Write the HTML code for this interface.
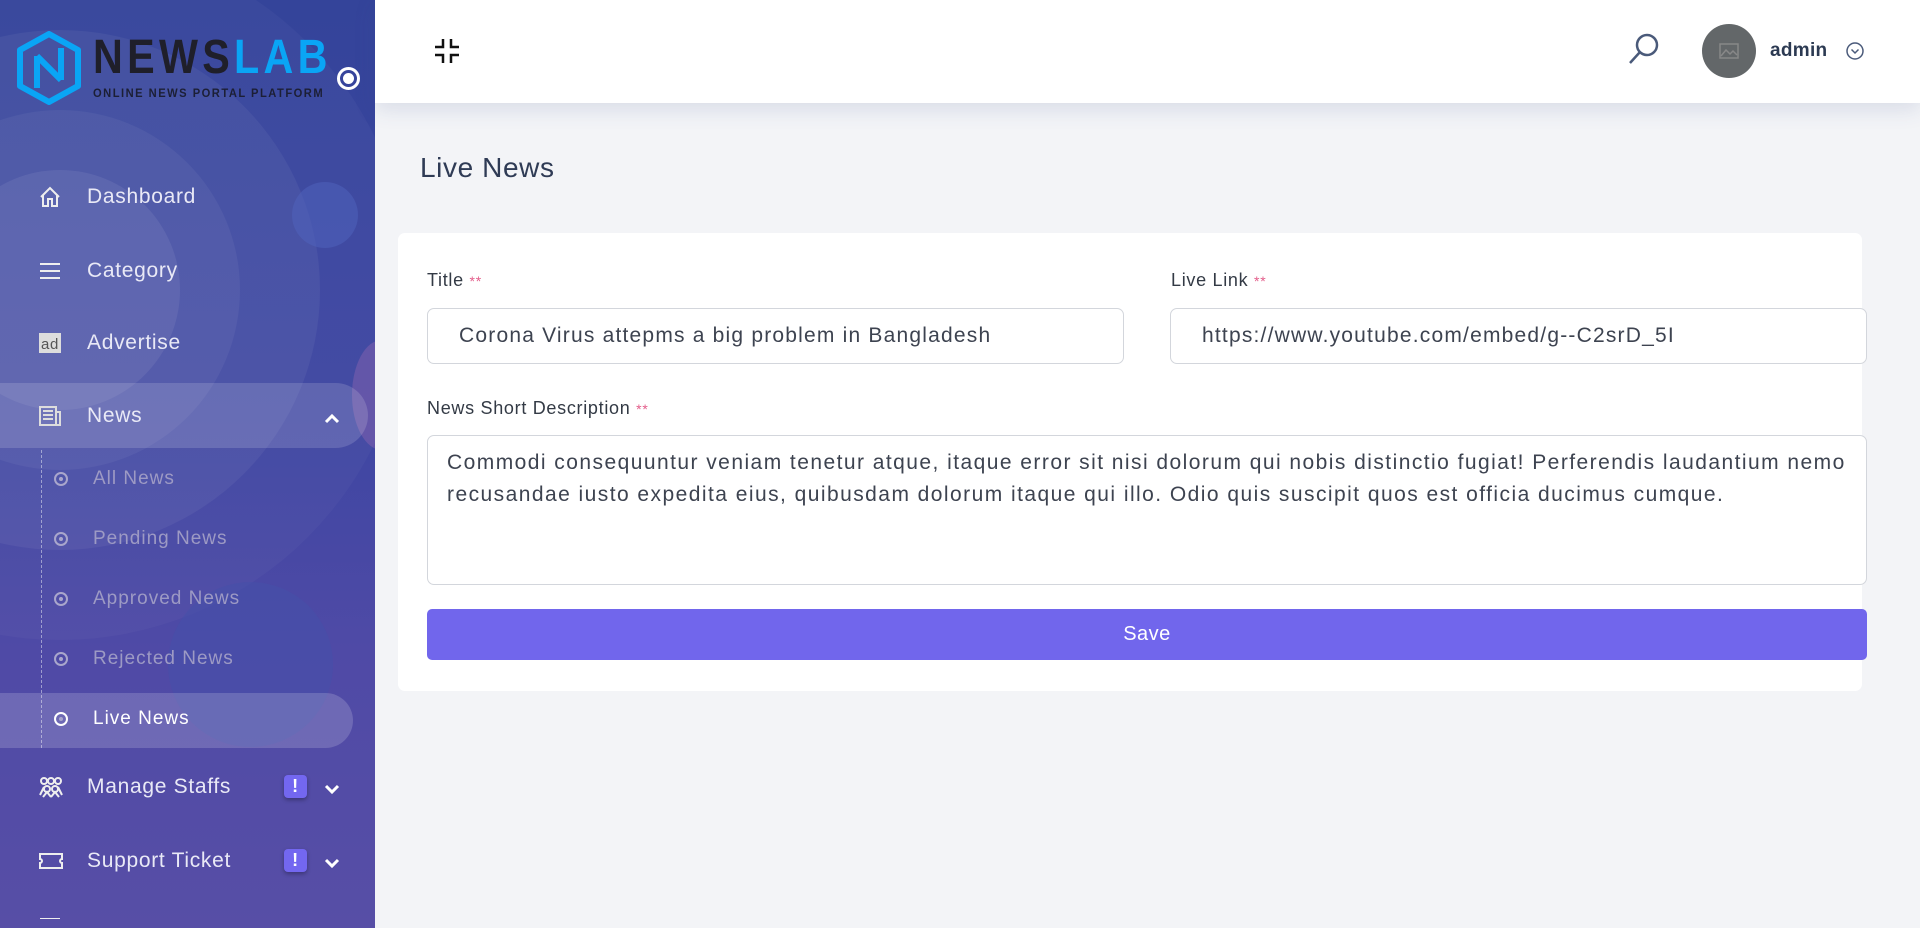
<!DOCTYPE html>
<html><head><meta charset="utf-8"><style>
*{box-sizing:border-box;margin:0;padding:0}
body{width:1920px;height:928px;overflow:hidden;font-family:"Liberation Sans",sans-serif;background:#f3f4f7;position:relative}
.sb{position:absolute;left:0;top:0;width:375px;height:928px;overflow:hidden;background:linear-gradient(180deg,#34449a 0%,#3e46a2 45%,#4f4aa6 70%,#574ea6 100%)}
.circ{position:absolute;border-radius:50%;background:rgba(255,255,255,0.05)}
.it{position:absolute;left:0;width:375px;color:#e9e9f6;font-size:21px;letter-spacing:.7px}
.it .t{position:absolute;left:87px;top:-13px;line-height:26px;white-space:nowrap}
.it svg{position:absolute;left:38px;top:-12px}
.sub{position:absolute;color:#9d9ac4;font-size:19px;letter-spacing:1px}
.sub .t{position:absolute;left:93px;top:-12px;white-space:nowrap;line-height:24px}
.sub .d{position:absolute;left:54px;top:-7px;width:14px;height:14px;border:2px solid #a9a6cc;border-radius:50%}
.sub .d:after{content:"";position:absolute;left:3px;top:3px;width:4px;height:4px;border-radius:50%;background:#a9a6cc}
.badge{position:absolute;left:284px;top:-12px;width:23px;height:23px;background:#7367f0;border-radius:4px;color:#fff;font-weight:bold;font-size:18px;text-align:center;line-height:23px;box-shadow:0 2px 4px rgba(0,0,0,.3)}
.it .chev{position:absolute;left:324px;top:-4px}
.hdr{position:absolute;left:375px;top:0;width:1545px;height:103px;background:#fff;box-shadow:0 6px 20px rgba(60,80,140,.15)}
.card{position:absolute;left:398px;top:233px;width:1464px;height:458px;background:#fff;border-radius:7px}
.lbl{position:absolute;font-size:18px;color:#333a45;letter-spacing:.7px}
.lbl b{color:#e35d8a;font-weight:normal;font-size:14px}
.inp{position:absolute;border:1px solid #d3d6dc;border-radius:7px;background:#fff;color:#3d4350;font-size:21px;letter-spacing:1.2px}
</style></head><body>
<div class="sb">
 <div class="circ" style="left:-290px;top:-60px;width:700px;height:700px;background:rgba(255,255,255,0.03)"></div>
 <div class="circ" style="left:-200px;top:30px;width:520px;height:520px"></div>
 <div class="circ" style="left:-120px;top:110px;width:360px;height:360px"></div>
 <div class="circ" style="left:-60px;top:170px;width:240px;height:240px;background:rgba(255,255,255,0.07)"></div>
 <div class="circ" style="left:292px;top:182px;width:66px;height:66px;background:rgba(80,100,190,.5)"></div>
 <div class="circ" style="left:352px;top:340px;width:60px;height:110px;background:rgba(160,110,180,.35)"></div>
 <div class="circ" style="left:168px;top:582px;width:165px;height:165px;background:rgba(70,80,170,.55)"></div>
 <svg style="position:absolute;left:16px;top:31px" width="66" height="74" viewBox="0 0 66 74"><path d="M33 3 L62 19 L62 55 L33 71 L4 55 L4 19 Z" fill="none" stroke="#0aa5f5" stroke-width="6" stroke-linejoin="round"/><path d="M21 25 V57 M21 25 L45 49 M45 17 V49" fill="none" stroke="#0aa5f5" stroke-width="6"/></svg>
 <div style="position:absolute;left:93px;top:33px;font-size:48px;font-weight:bold;letter-spacing:5px;color:#1f1f2a;line-height:50px;transform:scaleX(.86);transform-origin:left;white-space:nowrap">NEWS<span style="color:#0aa5f5">LAB</span></div>
 <div style="position:absolute;left:93px;top:86px;font-size:12px;font-weight:bold;letter-spacing:1.6px;color:#1c1f35;white-space:nowrap;transform:scaleX(.93);transform-origin:left">ONLINE NEWS PORTAL PLATFORM</div>
 <div style="position:absolute;left:337px;top:67px;width:23px;height:23px;border:3px solid #fff;border-radius:50%"><div style="position:absolute;left:3px;top:3px;width:11px;height:11px;background:#fff;border-radius:50%"></div></div>

 <div class="it" style="top:197px"><svg width="24" height="24" viewBox="0 0 24 24" fill="none" stroke="#eee" stroke-width="2"><path d="M3 12 L12 3 L21 12 M5 10 V21 H10 V14 H14 V21 H19 V10"/></svg><span class="t">Dashboard</span></div>
 <div class="it" style="top:271px"><svg width="24" height="24" viewBox="0 0 24 24" stroke="#eee" stroke-width="2"><path d="M2 5H22M2 12H22M2 19H22"/></svg><span class="t">Category</span></div>
 <div class="it" style="top:343px"><svg width="24" height="24" viewBox="0 0 24 24"><rect x="1" y="2" width="22" height="20" fill="#ddd"/><text x="12" y="18" font-size="15" text-anchor="middle" fill="#555" font-family="Liberation Sans">ad</text></svg><span class="t">Advertise</span></div>
 <div style="position:absolute;left:0;top:383px;width:368px;height:65px;background:rgba(255,255,255,.15);border-radius:0 33px 33px 0"></div>
 <div class="it" style="top:416px"><svg width="24" height="24" viewBox="0 0 24 24" fill="none" stroke="#ddd" stroke-width="2"><rect x="2" y="3" width="16" height="18"/><path d="M18 8H22V21H4M5 7H15M5 11H15M5 15H15"/></svg><span class="t">News</span><svg class="chev" width="16" height="12" viewBox="0 0 16 12" fill="none" stroke="#fff" stroke-width="3"><path d="M2 10L8 4L14 10"/></svg></div>
 <div style="position:absolute;left:41px;top:450px;height:298px;border-left:1px dashed rgba(255,255,255,.45)"></div>
 <div class="sub" style="top:479px"><span class="d"></span><span class="t">All News</span></div>
 <div class="sub" style="top:539px"><span class="d"></span><span class="t">Pending News</span></div>
 <div class="sub" style="top:599px"><span class="d"></span><span class="t">Approved News</span></div>
 <div class="sub" style="top:659px"><span class="d"></span><span class="t">Rejected News</span></div>
 <div style="position:absolute;left:0;top:693px;width:353px;height:55px;background:rgba(255,255,255,.17);border-radius:0 28px 28px 0"></div>
 <div class="sub" style="top:719px;color:#fff"><span class="d" style="border-color:#fff"></span><span class="t">Live News</span></div>
 <div class="it" style="top:787px"><svg width="26" height="24" viewBox="0 0 26 24" fill="none" stroke="#eee" stroke-width="2"><circle cx="6" cy="6" r="3"/><circle cx="13" cy="6" r="3"/><circle cx="20" cy="6" r="3"/><circle cx="9" cy="14" r="3"/><circle cx="17" cy="14" r="3"/><path d="M2 20L6 12M24 20L20 12M5 22L9 17L13 22M13 22L17 17L21 22"/></svg><span class="t">Manage Staffs</span><span class="badge">!</span><svg class="chev" width="16" height="12" viewBox="0 0 16 12" fill="none" stroke="#fff" stroke-width="3"><path d="M2 3L8 9L14 3"/></svg></div>
 <div class="it" style="top:861px"><svg width="26" height="24" viewBox="0 0 26 24" fill="none" stroke="#eee" stroke-width="2"><path d="M2 5H24V10A2 2 0 0 0 24 14V19H2V14A2 2 0 0 0 2 10Z"/></svg><span class="t">Support Ticket</span><span class="badge">!</span><svg class="chev" width="16" height="12" viewBox="0 0 16 12" fill="none" stroke="#fff" stroke-width="3"><path d="M2 3L8 9L14 3"/></svg></div>
 <div class="it" style="top:930px"><svg width="24" height="24" viewBox="0 0 24 24" stroke="#eee" stroke-width="2"><path d="M2 0H22"/></svg></div>
</div>

<div class="hdr">
 <svg style="position:absolute;left:58px;top:37px" width="28" height="28" viewBox="0 0 28 28" fill="none" stroke="#111" stroke-width="2.5"><path d="M2 10H10V2M18 2V10H26M2 18H10V26M26 18H18V26"/></svg>
 <svg style="position:absolute;left:1252px;top:32px" width="34" height="34" viewBox="0 0 34 34" fill="none" stroke="#4a5a7a" stroke-width="2.5"><circle cx="20" cy="13" r="10"/><path d="M13 20L3 31"/></svg>
 <div style="position:absolute;left:1327px;top:24px;width:54px;height:54px;border-radius:50%;background:#636769"></div>
 <svg style="position:absolute;left:1344px;top:43px" width="20" height="16" viewBox="0 0 20 16" fill="none" stroke="#888" stroke-width="1.5"><rect x="1" y="1" width="18" height="14"/><path d="M2 13L7 7L11 11L14 8L18 12"/></svg>
 <div style="position:absolute;left:1395px;top:40px;font-size:19px;font-weight:bold;color:#2c3a52;letter-spacing:.3px">admin</div>
 <svg style="position:absolute;left:1471px;top:42px" width="18" height="18" viewBox="0 0 18 18" fill="none" stroke="#4a5a7a" stroke-width="1.5"><circle cx="9" cy="9" r="8"/><path d="M5.5 7.5L9 11L12.5 7.5"/></svg>
</div>

<div style="position:absolute;left:420px;top:152px;font-size:28px;color:#2f3b55;letter-spacing:.6px">Live News</div>

<div class="card">
 <div class="lbl" style="left:29px;top:37px">Title <b>**</b></div>
 <div class="inp" style="left:29px;top:75px;width:697px;height:56px"><span style="position:absolute;left:31px;top:15px;white-space:nowrap">Corona Virus attepms a big problem in Bangladesh</span></div>
 <div class="lbl" style="left:773px;top:37px">Live Link <b>**</b></div>
 <div class="inp" style="left:772px;top:75px;width:697px;height:56px"><span style="position:absolute;left:31px;top:15px;white-space:nowrap">https://www.youtube.com/embed/g--C2srD_5I</span></div>
 <div class="lbl" style="left:29px;top:165px">News Short Description <b>**</b></div>
 <div class="inp" style="left:29px;top:202px;width:1440px;height:150px;line-height:32px;padding:11px 0 0 19px;font-size:21px;letter-spacing:1.45px;white-space:nowrap;overflow:hidden">Commodi consequuntur veniam tenetur atque, itaque error sit nisi dolorum qui nobis distinctio fugiat! Perferendis laudantium nemo<br>recusandae iusto expedita eius, quibusdam dolorum itaque qui illo. Odio quis suscipit quos est officia ducimus cumque.</div>
 <div style="position:absolute;left:29px;top:376px;width:1440px;height:51px;background:#7166ec;border-radius:5px;color:#fff;font-size:20px;text-align:center;line-height:51px;letter-spacing:.5px">Save</div>
</div>
</body></html>
